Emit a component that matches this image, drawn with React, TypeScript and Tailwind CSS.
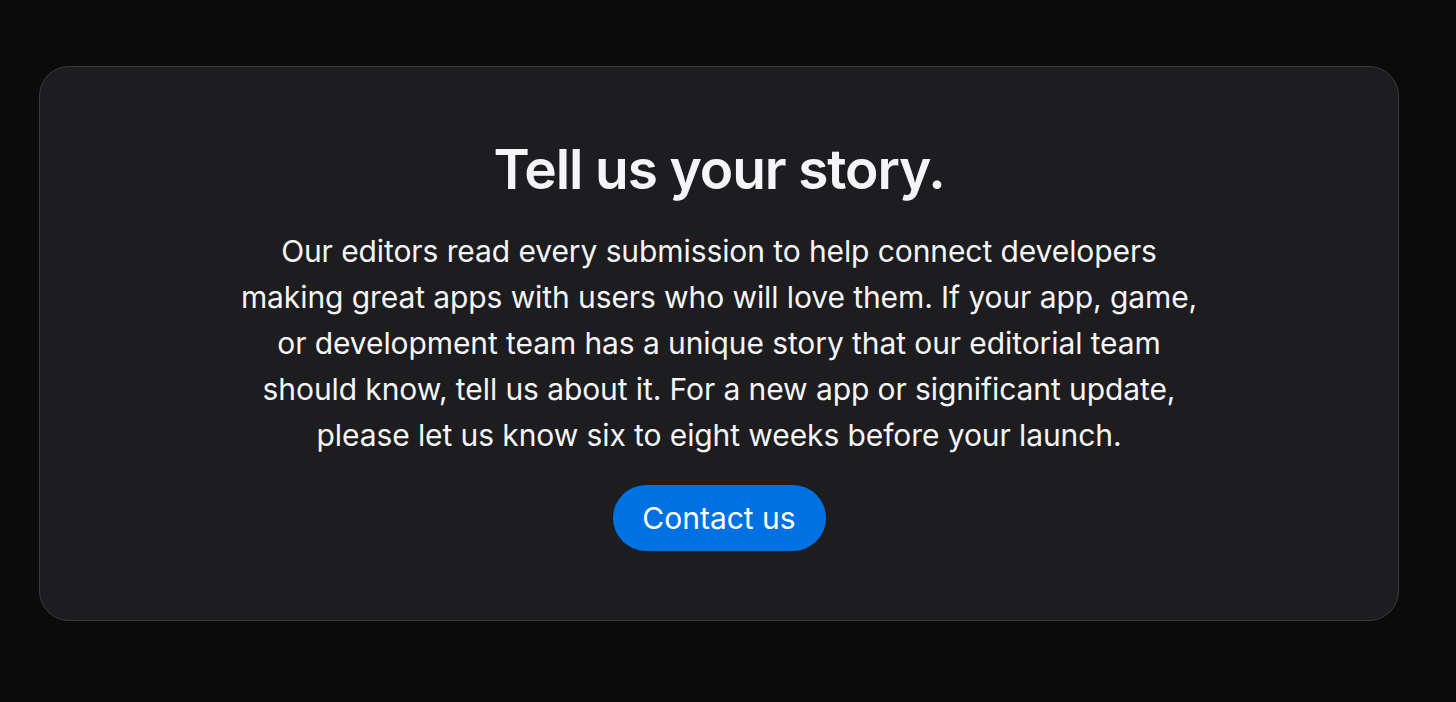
export default function App() {
    return (
        <div className="min-h-screen bg-[#0b0b0b] pl-[39px] pt-[66px] font-['Inter',sans-serif]">
            <div className="flex h-[555px] w-[1360px] flex-col items-center rounded-[30px] border border-[#3a3a3c] bg-[#1d1d1f] pt-[70px] text-center text-[#f5f5f7]">
                <h2 className="text-[55px] font-semibold leading-[64px] tracking-[-0.02em]">Tell us your story.</h2>
                <p className="mt-[27px] max-w-[975px] text-[30px] leading-[46px] tracking-[-0.003em]">
                    Our editors read every submission to help connect developers making great apps with users who will love them. If your app, game, or development team has a unique story that our editorial team should know, tell us about it. For a new app or significant update, please let us know six to eight weeks before your launch.
                </p>
                <button className="mt-[27px] h-[66px] w-[213px] rounded-full bg-[#0071e3] text-[30px] text-white">
                    Contact us
                </button>
            </div>
        </div>
    );
}
